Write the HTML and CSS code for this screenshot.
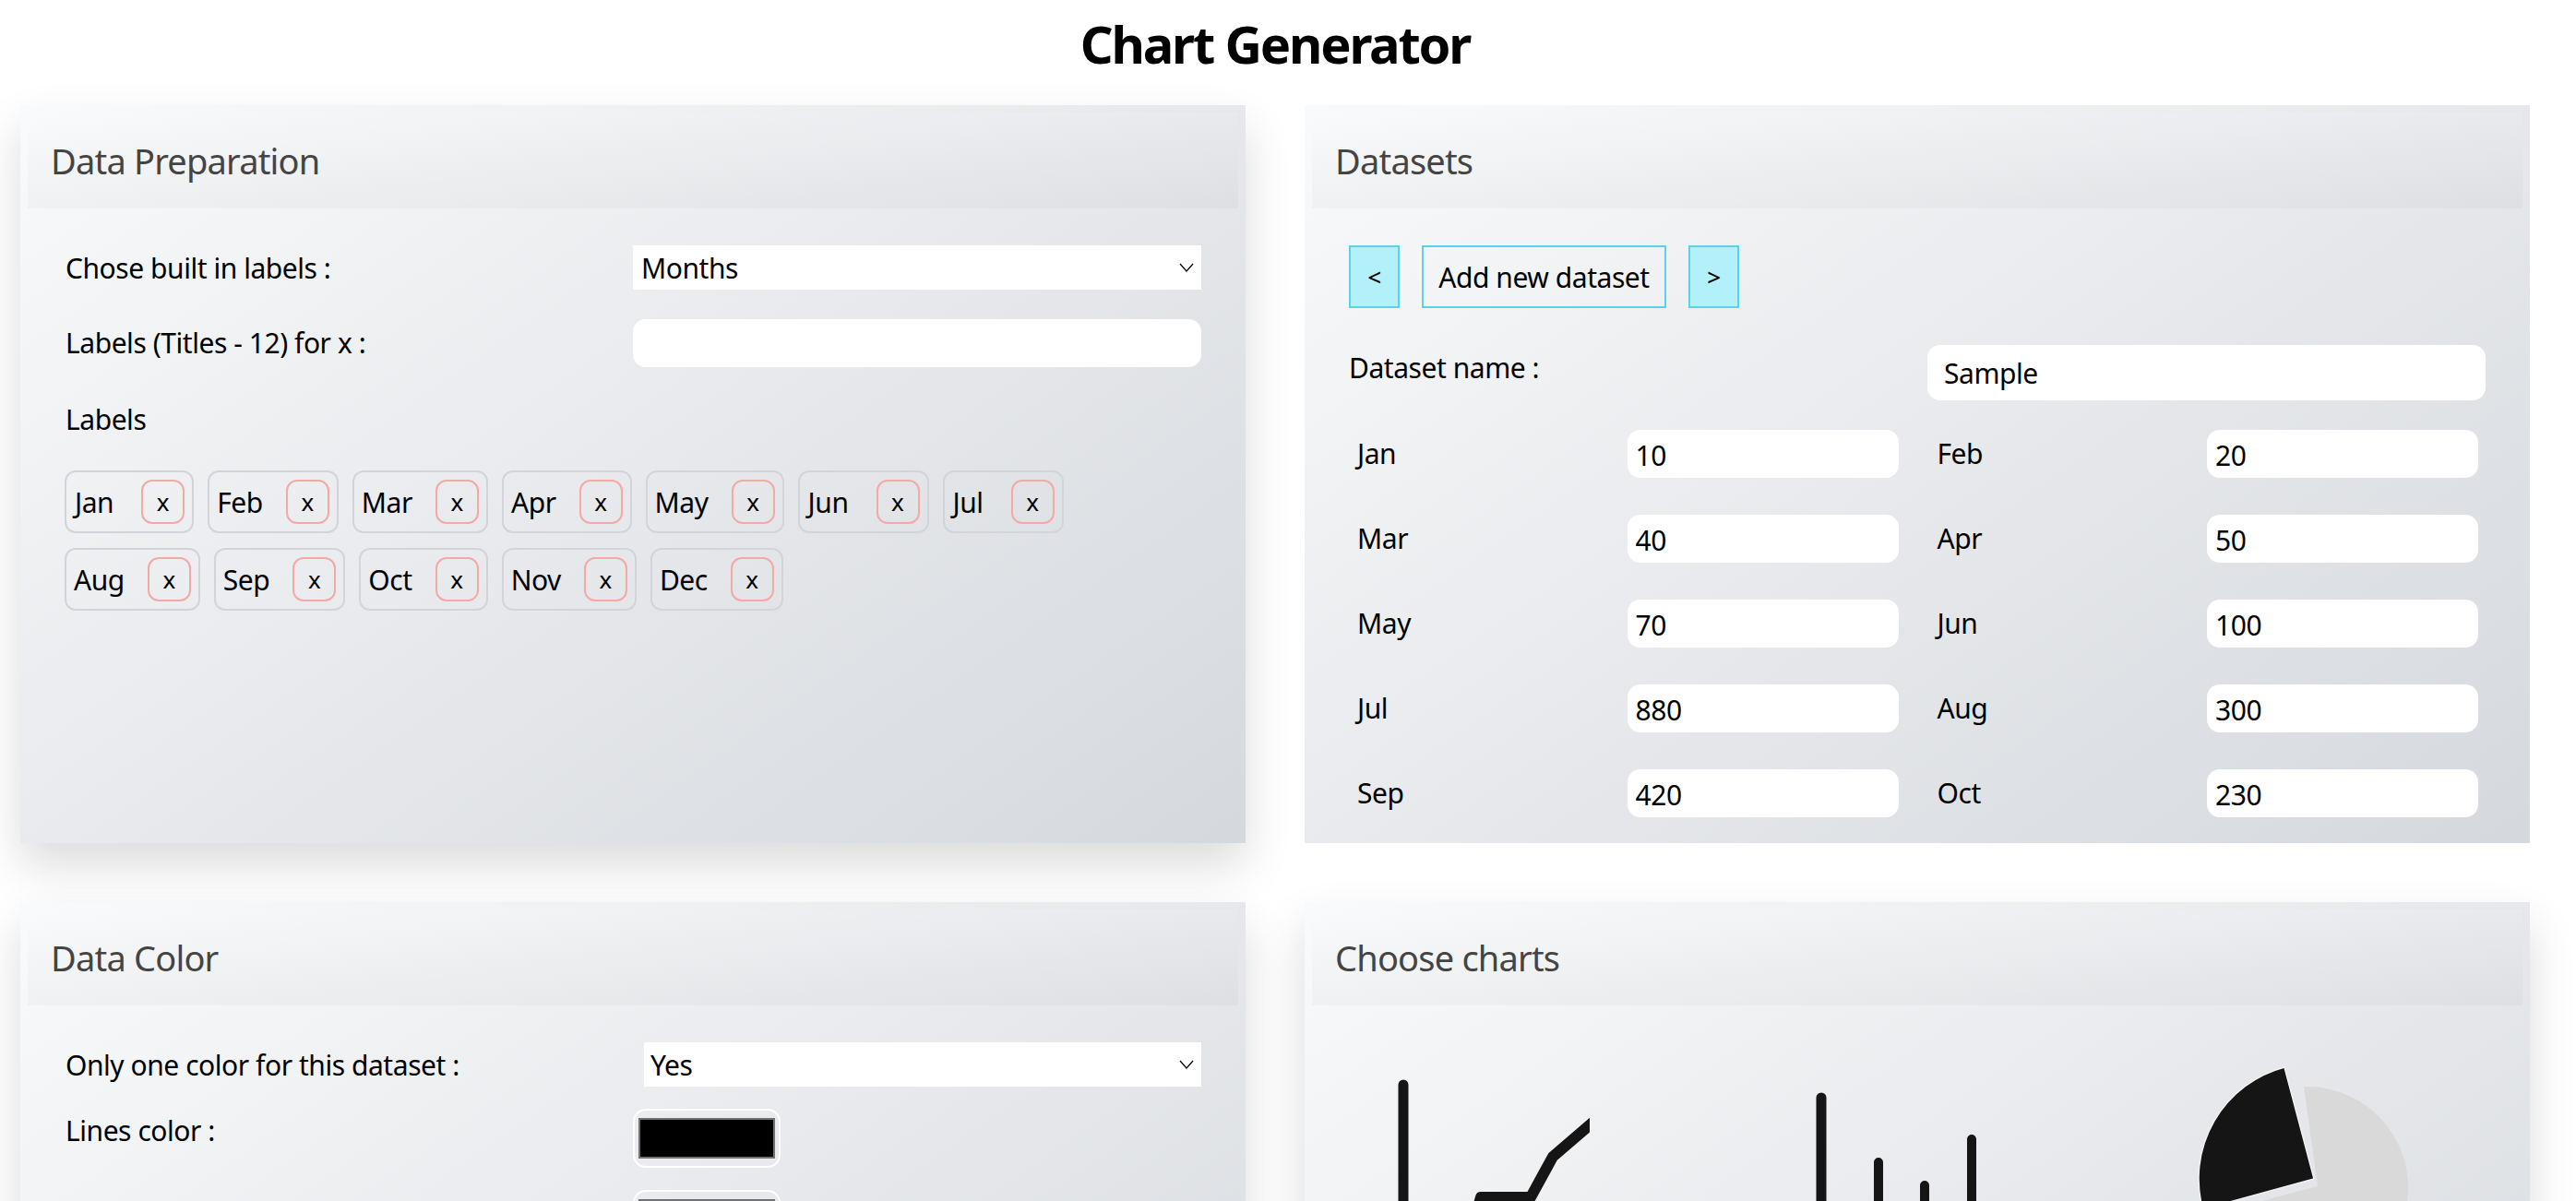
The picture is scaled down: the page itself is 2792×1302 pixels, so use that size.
FILE: index.html
```html
<!DOCTYPE html>
<html lang="en">
<head>
    <meta charset="UTF-8">
    <meta name="viewport" content="width=device-width, initial-scale=1.0">
    <title>Chart Generator</title>
    <link rel="stylesheet" href="styles.css">
</head>
<body>

<h1 class="page-title">Chart Generator</h1>

<main class="panels">

    <section class="panel">
        <h2 class="panel-title">Data Preparation</h2>
        <div class="panel-body">
            <div class="field field-first">
                <label for="built-in">Chose built in labels :</label>
                <select id="built-in" class="select">
                    <option>Months</option>
                </select>
            </div>
            <div class="field field-labels">
                <label for="labels-x">Labels (Titles - 12) for x :</label>
                <input id="labels-x" class="text-input" type="text">
            </div>
            <p class="labels-heading">Labels</p>
            <div class="tags">
                <span class="tag tag-narrow">Jan <button class="tag-remove">x</button></span>
                <span class="tag">Feb <button class="tag-remove">x</button></span>
                <span class="tag">Mar <button class="tag-remove">x</button></span>
                <span class="tag">Apr <button class="tag-remove">x</button></span>
                <span class="tag">May <button class="tag-remove">x</button></span>
                <span class="tag tag-narrow">Jun <button class="tag-remove">x</button></span>
                <span class="tag tag-narrow">Jul <button class="tag-remove">x</button></span>
                <span class="tag">Aug <button class="tag-remove">x</button></span>
                <span class="tag">Sep <button class="tag-remove">x</button></span>
                <span class="tag">Oct <button class="tag-remove">x</button></span>
                <span class="tag">Nov <button class="tag-remove">x</button></span>
                <span class="tag">Dec <button class="tag-remove">x</button></span>
            </div>
        </div>
    </section>

    <section class="panel panel-flat">
        <h2 class="panel-title">Datasets</h2>
        <div class="panel-body panel-body-data">
            <div class="dataset-nav">
                <button class="nav-btn nav-arrow">&lt;</button>
                <button class="nav-btn nav-add">Add new dataset</button>
                <button class="nav-btn nav-arrow">&gt;</button>
            </div>
            <div class="dataset-name">
                <label for="dataset-name">Dataset name :</label>
                <input id="dataset-name" class="text-input name-input" type="text" value="Sample">
            </div>
            <div class="points">
                <div class="point"><label>Jan</label><input class="text-input" type="text" value="10"></div>
                <div class="point"><label>Feb</label><input class="text-input" type="text" value="20"></div>
                <div class="point"><label>Mar</label><input class="text-input" type="text" value="40"></div>
                <div class="point"><label>Apr</label><input class="text-input" type="text" value="50"></div>
                <div class="point"><label>May</label><input class="text-input" type="text" value="70"></div>
                <div class="point"><label>Jun</label><input class="text-input" type="text" value="100"></div>
                <div class="point"><label>Jul</label><input class="text-input" type="text" value="880"></div>
                <div class="point"><label>Aug</label><input class="text-input" type="text" value="300"></div>
                <div class="point"><label>Sep</label><input class="text-input" type="text" value="420"></div>
                <div class="point"><label>Oct</label><input class="text-input" type="text" value="230"></div>
            </div>
        </div>
    </section>

    <section class="panel">
        <h2 class="panel-title">Data Color</h2>
        <div class="panel-body">
            <div class="field field-first field-first-color">
                <label for="one-color">Only one color for this dataset :</label>
                <select id="one-color" class="select select-short">
                    <option>Yes</option>
                </select>
            </div>
            <div class="field-color">
                <label for="lines-color">Lines color :</label>
                <input id="lines-color" class="color-input" type="color" value="#000000">
            </div>
            <div class="field-color">
                <span></span>
                <input class="color-input" type="color" value="#777777" aria-label="Fill color">
            </div>
        </div>
    </section>

    <section class="panel">
        <h2 class="panel-title">Choose charts</h2>
        <div class="panel-body charts">
            <svg class="chart chart-line" viewBox="0 0 224 200" width="224" height="200">
                <path d="M22 6V200" class="chart-axis"/>
                <path d="M86 200L106 128H160L184 84L240 36" class="chart-stroke"/>
            </svg>
            <svg class="chart chart-bars" viewBox="0 0 190 200" width="190" height="200">
                <path d="M6 6V200" class="chart-axis"/>
                <path d="M68 76V200M118 101V200M169 51V200" class="chart-bar"/>
            </svg>
            <svg class="chart chart-pie" viewBox="0 0 260 200" width="260" height="200">
                <path d="M127 28A110 110 0 1 1 24 167L142 136Z" fill="#d9d9d9"/>
                <path d="M106 7L138 128L17.500 161A125 125 0 0 1 106 7Z" fill="#151515" stroke="#f2f2f4" stroke-width="1.5"/>
            </svg>
        </div>
    </section>

</main>

</body>
</html>
```

FILE: styles.css
```css
html, body {
    margin: 0;
    padding: 0;
    height: 1302px;
    overflow: hidden;
    background: #fff;
}
body {
    font-family: "Noto Sans", sans-serif;
    font-size: 30px;
    letter-spacing: -.45px;
    color: #000;
}
.page-title {
    margin: 0;
    height: 114px;
    padding: 0 50px 0 22px;
    box-sizing: border-box;
    line-height: 94px;
    font-size: 56px;
    font-weight: 700;
    letter-spacing: -2.2px;
    text-align: center;
}
.panels {
    display: grid;
    grid-template-columns: 1328px 1328px;
    grid-auto-rows: 800px;
    gap: 64px;
    padding-left: 22px;
}
.panel {
    padding: 8px;
    box-sizing: border-box;
    overflow: hidden;
    background: linear-gradient(145deg, #f9fafb, #d5d8dd);
    box-shadow: 0 24px 48px rgba(0, 0, 0, .14);
}
.panel-flat {
    box-shadow: none;
}
.panel-title {
    margin: 0;
    height: 104px;
    padding: 0 25px;
    box-sizing: border-box;
    line-height: 104px;
    font-size: 38px;
    font-weight: 400;
    letter-spacing: -.8px;
    color: #444;
    background: linear-gradient(180deg, rgba(255, 255, 255, .08), rgba(0, 0, 0, .028));
}
.panel-body {
    padding: 40px 40px 0 41px;
}
.panel-body-data {
    padding-left: 40px;
}
.field {
    display: flex;
    align-items: center;
    justify-content: space-between;
}
.field-first {
    margin-bottom: 32px;
}
.field-first-color {
    margin-bottom: 24px;
}
.field-labels label {
    padding-bottom: 2px;
}
.select {
    width: 616px;
    height: 48px;
    padding: 0 40px 0 9px;
    border: 0;
    border-radius: 0;
    background: #fff url("data:image/svg+xml,%3Csvg xmlns='http://www.w3.org/2000/svg' width='16' height='10'%3E%3Cpath d='M1 1l7 8 7-8' fill='none' stroke='%23000' stroke-width='1.2'/%3E%3C/svg%3E") no-repeat right 8px center;
    font: inherit;
    letter-spacing: inherit;
    appearance: none;
}
.select-short {
    width: 604px;
    padding-left: 7px;
}
.text-input {
    height: 52px;
    padding: 2px 9px 0;
    box-sizing: border-box;
    border: 0;
    border-radius: 14px;
    background: #fff;
    font: inherit;
    letter-spacing: inherit;
    color: #000;
}
.field-labels .text-input {
    width: 616px;
}
.labels-heading {
    margin: 38px 0 36px;
    line-height: 38px;
}
.tags {
    display: flex;
    flex-wrap: wrap;
    gap: 16px 15px;
    width: 1100px;
    margin-left: -1px;
}
.tag {
    display: inline-flex;
    align-items: center;
    justify-content: space-between;
    gap: 25px;
    height: 68px;
    padding: 0 8px;
    box-sizing: border-box;
    border: 2px solid #d2d4da;
    border-radius: 12px;
}
.tag-narrow {
    gap: 30px;
    padding-left: 9px;
}
.tag-remove {
    width: 47px;
    height: 48px;
    padding: 0;
    border: 2px solid #f4a9a6;
    border-radius: 12px;
    background: transparent;
    font: inherit;
    font-size: 26px;
    color: #000;
}
.dataset-nav {
    display: flex;
    gap: 24px;
    margin-bottom: 40px;
}
.nav-btn {
    height: 68px;
    padding: 0;
    box-sizing: border-box;
    border: 2px solid #5fd0ea;
    background: transparent;
    font: inherit;
    letter-spacing: inherit;
    color: #000;
}
.nav-add {
    width: 265px;
}
.nav-arrow {
    width: 55px;
    font-size: 26px;
    font-weight: 500;
    background: #b3f1fa;
}
.dataset-name {
    display: flex;
    justify-content: space-between;
    margin-bottom: 32px;
}
.dataset-name label {
    padding: 4px 0 0;
}
.name-input {
    width: 605px;
    height: 60px;
    padding: 1px 18px 0;
}
.points {
    display: grid;
    grid-template-columns: 1fr 1fr;
    column-gap: 42px;
    row-gap: 40px;
    width: 1215px;
    margin-left: 9px;
}
.point {
    display: grid;
    grid-template-columns: 1fr 294px;
    align-items: center;
}
.point label {
    padding-bottom: 2px;
}
.point .text-input {
    width: 294px;
}
.field-color {
    display: flex;
    justify-content: space-between;
    width: 775px;
    height: 64px;
    margin-bottom: 24px;
}
.field-color label {
    padding-top: 3px;
}
.color-input {
    width: 160px;
    height: 64px;
    padding: 8px 4px;
    box-sizing: border-box;
    border: 2px solid #fff;
    border-radius: 14px;
    background: transparent;
}
.color-input::-webkit-color-swatch-wrapper {
    padding: 0;
}
.color-input::-webkit-color-swatch {
    border: 2px solid #707070;
    border-radius: 0;
}
.charts {
    display: flex;
    padding: 0;
}
.chart {
    flex: none;
}
.chart-line {
    margin: 80px 0 0 77px;
}
.chart-bars {
    margin: 94px 0 0 245px;
}
.chart-pie {
    margin: 60px 0 0 212px;
}
.chart-axis, .chart-bar {
    fill: none;
    stroke: #151515;
    stroke-linecap: round;
}
.chart-axis {
    stroke-width: 11;
}
.chart-bar {
    stroke-width: 10;
}
.chart-stroke {
    fill: none;
    stroke: #151515;
    stroke-width: 12;
    stroke-linejoin: round;
}
```
